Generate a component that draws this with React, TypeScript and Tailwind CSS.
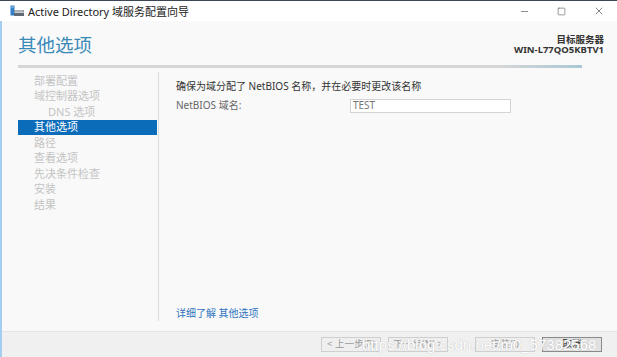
import { Minus, Square, X } from "lucide-react";

const font = {
  fontFamily: '"Noto Sans", "Noto Sans CJK SC", sans-serif',
};

const steps = [
  { label: "部署配置", indent: false },
  { label: "域控制器选项", indent: false },
  { label: "DNS 选项", indent: true },
  { label: "其他选项", indent: false, active: true },
  { label: "路径", indent: false },
  { label: "查看选项", indent: false },
  { label: "先决条件检查", indent: false },
  { label: "安装", indent: false },
  { label: "结果", indent: false },
];

const AdIcon = () => (
  <svg width="15" height="12" viewBox="0 0 15 12">
    <rect x="0.5" y="0.5" width="4" height="10" fill="#2f7fc9" />
    <rect x="1.5" y="1.5" width="2" height="1" fill="#cfe3f5" />
    <rect x="4" y="5" width="10" height="2.5" fill="#8c959e" />
    <rect x="4" y="8" width="10" height="3" fill="#5f6a75" />
    <rect x="5" y="5.5" width="8" height="1" fill="#c9cfd5" />
  </svg>
);

const WizardButton = ({
  label,
  primary,
  className,
}: {
  label: string;
  primary?: boolean;
  className?: string;
}) => (
  <div
    className={`h-[15px] w-[60px] flex items-center justify-center text-[9.5px] border ${
      primary
        ? "border-[#8a8a8a] bg-[#e1e1e1] text-[#222]"
        : "border-[#cfcfcf] bg-[#efefef] text-[#9a9a9a]"
    } ${className ?? ""}`}
  >
    {label}
  </div>
);

export default function App() {
  return (
    <div
      className="w-[617px] h-[357px] flex flex-col bg-[#f9f9f9] overflow-hidden relative"
      style={font}
    >
      {/* Title bar */}
      <div className="h-[21px] shrink-0 bg-white border-t border-[#3b4756] flex items-center">
        <div className="pl-[10px] pr-[3px] flex items-center">
          <AdIcon />
        </div>
        <span className="text-[11px] text-[#222] leading-none">
          Active Directory 域服务配置向导
        </span>
        <div className="ml-auto flex items-center text-[#333]">
          <div className="w-[37px] flex justify-center">
            <Minus size={11} strokeWidth={1.2} />
          </div>
          <div className="w-[37px] flex justify-center">
            <Square size={9} strokeWidth={1.3} />
          </div>
          <div className="w-[37px] flex justify-center">
            <X size={12} strokeWidth={1.2} />
          </div>
        </div>
      </div>

      <div className="flex-1 flex flex-col border-l-2 border-[#a5cdf1]">
        {/* Header */}
        <div className="h-[44px] shrink-0 flex items-start pl-[16px] pr-[13px]">
          <h1 className="pt-[12px] text-[18.5px] leading-[24px] text-[#3a8ab8]">
            其他选项
          </h1>
          <div className="ml-auto pt-[14px] flex flex-col items-end text-[9.5px] font-bold leading-[10px] text-[#333]">
            <span>目标服务器</span>
            <span>WIN-L77QO5KBTV1</span>
          </div>
        </div>
        <div className="ml-[16px] mr-[35px] h-[3px] shrink-0 bg-gradient-to-r from-[#d6d6d6] via-[#d6d6d6] via-85% to-[#a9c9d6]" />

        {/* Main */}
        <div className="flex-1 flex">
          <div className="w-[139px] ml-[16px] pt-[5px] flex flex-col">
            {steps.map((s) => (
              <div
                key={s.label}
                className={`h-[15.5px] flex items-center text-[11px] ${
                  s.active
                    ? "bg-[#0b6cba] text-white pl-[16px]"
                    : s.indent
                    ? "text-[#c4c4c4] pl-[30px]"
                    : "text-[#c4c4c4] pl-[16px]"
                }`}
              >
                {s.label}
              </div>
            ))}
          </div>
          <div className="w-px bg-[#dcdcdc] mt-[4px] mb-[10px] ml-[1px]" />
          <div className="flex-1 flex flex-col pl-[17px] pt-[12px] pb-[10px]">
            <p className="text-[10px] leading-[13px] text-[#333]">
              确保为域分配了 NetBIOS 名称，并在必要时更改该名称
            </p>
            <div className="flex items-center mt-[5px]">
              <span className="w-[174px] text-[10px] text-[#666]">
                NetBIOS 域名:
              </span>
              <div className="w-[161px] h-[14px] border border-[#d4d4d4] bg-white flex items-center pl-[2px] text-[10px] text-[#777]">
                TEST
              </div>
            </div>
            <span className="mt-auto text-[10px] text-[#2f74c0]">
              详细了解 其他选项
            </span>
          </div>
        </div>

        {/* Footer */}
        <div className="h-[26px] shrink-0 bg-[#f0f0f0] border-t border-[#e4e4e4] flex items-center pr-[15px]">
          <div className="ml-auto flex items-center">
            <WizardButton label="< 上一步(P)" />
            <WizardButton label="下一步(N) >" className="ml-[7px]" />
            <WizardButton label="安装(I)" className="ml-[27px]" />
            <WizardButton label="取消" primary className="ml-[7px]" />
          </div>
        </div>
      </div>

      {/* Watermark */}
      <span
        className="absolute left-[362px] top-[334px] text-[15px] text-white pointer-events-none"
        style={{
          fontFamily: '"Liberation Sans", sans-serif',
          textShadow: "0 0 1px #c4c4c4, 0 0 1px #c4c4c4",
        }}
      >
        https://blog.csdn.net/m0_57382568
      </span>
    </div>
  );
}
